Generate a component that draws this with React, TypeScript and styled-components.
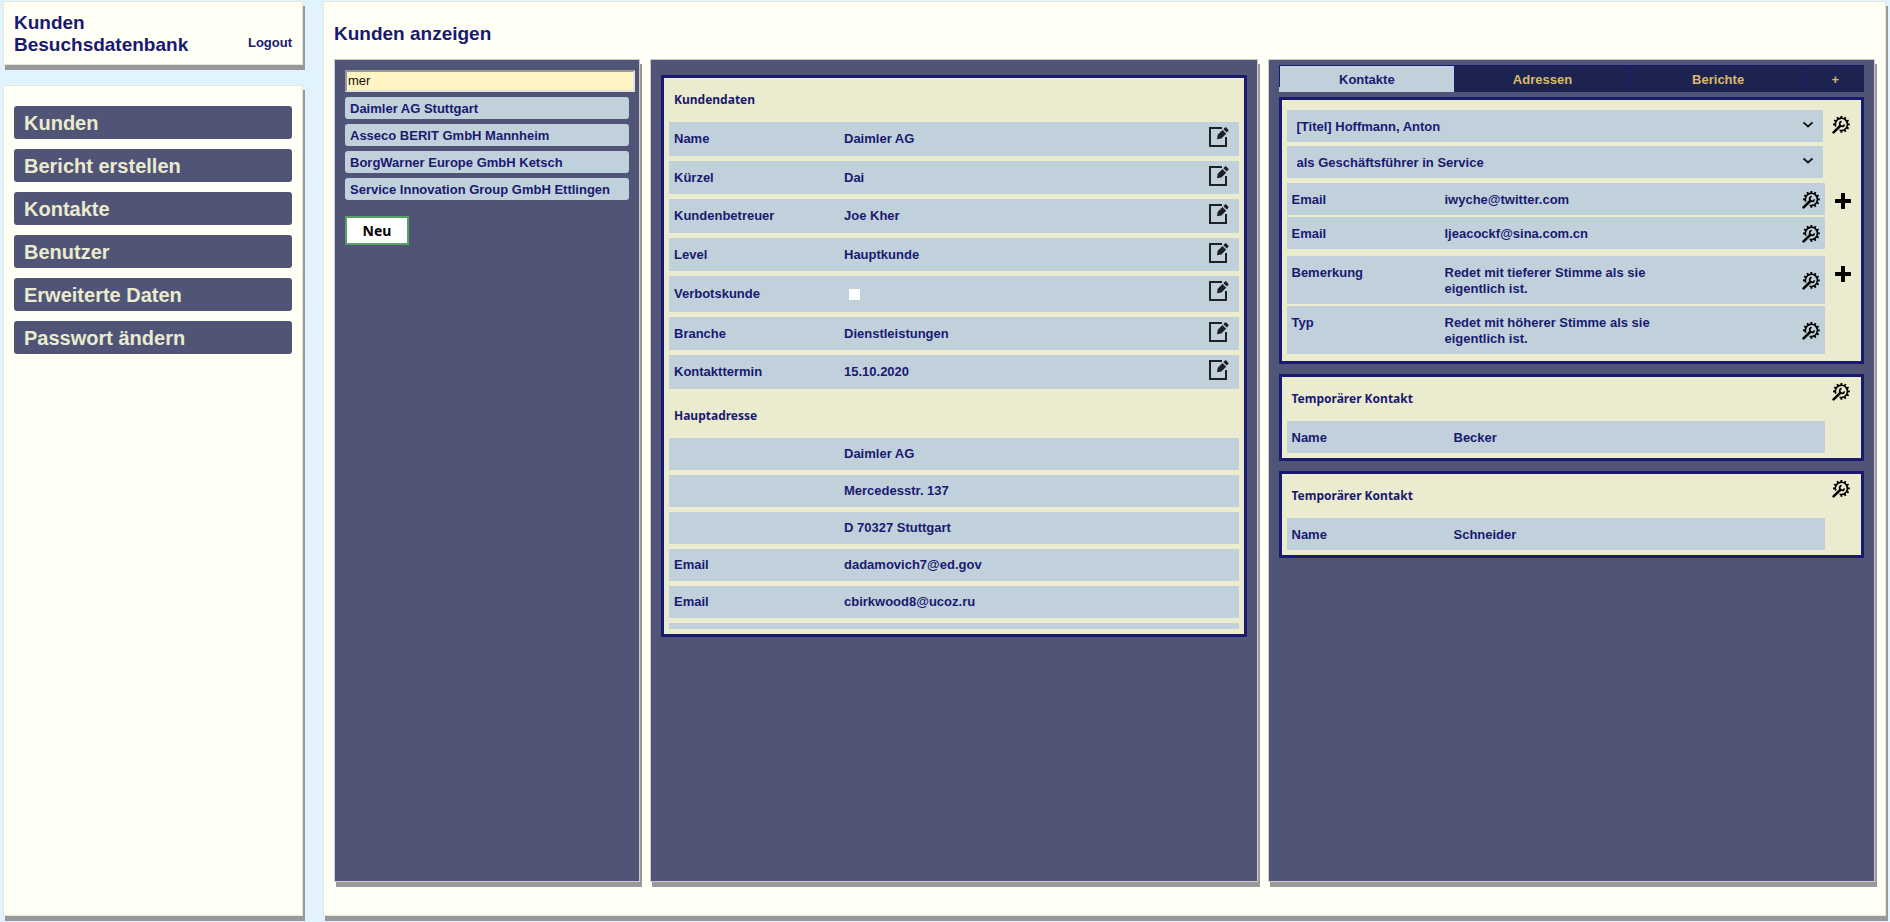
import React from "react";
import styled, { createGlobalStyle } from "styled-components";

const color = {
  sky: "#e1f3ff",
  ivory: "#fffff6",
  slate: "#505577",
  night: "#1d2351",
  navy: "#191970",
  cream: "#ebebcf",
  steel: "#c1d1dc",
  gold: "#dbb96b",
  shadow: "#999999",
};

const headingFont = `"Noto Sans", "Open Sans", sans-serif`;

const GlobalStyle = createGlobalStyle`
  * { box-sizing: border-box; }
  body {
    margin: 0;
    background: ${color.sky};
    color: ${color.navy};
    font: bold 13px/16px "Liberation Sans", Arial, sans-serif;
  }
  h1, h2, h3, ul, dl, dd { margin: 0; padding: 0; }
  button, input, select { font: inherit; color: inherit; }
  button { cursor: pointer; }
`;

const Page = styled.div`
  display: flex;
  gap: 20px;
  min-height: 100vh;
  padding: 1px 4px 6px 3px;
`;

const Sidebar = styled.div`
  display: flex;
  flex-direction: column;
  flex: 0 0 300px;
  gap: 20px;
`;

const Sheet = styled.div`
  background: ${color.ivory};
  border: 1px solid #e6e8d6;
  box-shadow: 2px 5px 0 ${color.shadow};
`;

const Brand = styled(Sheet).attrs({ as: "header" })`
  display: flex;
  justify-content: space-between;
  align-items: flex-end;
  height: 64px;
  padding: 8px 10px;
`;

const BrandTitle = styled.h1`
  font-size: 19px;
  line-height: 22px;
`;

const LogoutLink = styled.a`
  padding-bottom: 5px;
  color: inherit;
  text-decoration: none;
`;

const Navigation = styled(Sheet).attrs({ as: "nav" })`
  flex: 1;
  padding: 20px 10px;
`;

const NavList = styled.ul`
  display: flex;
  flex-direction: column;
  gap: 10px;
  list-style: none;
`;

const NavLink = styled.a`
  display: block;
  padding: 2px 10px 0;
  border-radius: 3px;
  background: ${color.slate};
  color: ${color.cream};
  font-size: 20px;
  line-height: 31px;
  text-decoration: none;
`;

const Main = styled(Sheet).attrs({ as: "main" })`
  display: flex;
  flex-direction: column;
  flex: 1;
  min-width: 0;
  padding: 0 10px 33px;
`;

const PageTitle = styled.h2`
  padding: 21px 0 14px;
  font-size: 19px;
  line-height: 22px;
`;

const Columns = styled.div`
  display: grid;
  grid-template-columns: 306px minmax(0, 1fr) minmax(0, 1fr);
  gap: 10px;
  flex: 1;
`;

const Column = styled.section<{ $top: number }>`
  padding: ${(p) => p.$top}px 10px 10px;
  background: ${color.slate};
  border: 1px solid #cccccc;
  box-shadow: 2px 5px 0 ${color.shadow};
`;

const SearchInput = styled.input`
  display: block;
  box-sizing: content-box;
  width: 100%;
  height: 16px;
  padding: 1px;
  border: 2px solid;
  border-color: #999999 #e2e2e2 #e2e2e2 #999999;
  background: #fff5c4;
  color: #111111;
  font-weight: normal;
  outline: 0;
`;

const ResultList = styled.ul`
  display: flex;
  flex-direction: column;
  gap: 5px;
  margin: 5px 0 16px;
  list-style: none;
`;

const ResultButton = styled.button`
  display: block;
  width: 100%;
  height: 22px;
  padding: 1px 5px 0;
  border: 0;
  border-radius: 3px;
  background: ${color.steel};
  text-align: left;
`;

const NewButton = styled.button`
  width: 64px;
  height: 29px;
  padding: 0;
  border: 2px solid #57a263;
  background: #ffffff;
  color: #000000;
  font: bold 14px/20px ${headingFont};
`;

const Card = styled.div`
  padding: 0 5px 5px;
  background: ${color.cream};
  border: 3px solid ${color.navy};
`;

const CardTitle = styled.h3`
  display: flex;
  align-items: center;
  height: 44px;
  padding: 0 5px;
  font: bold 12px/16px ${headingFont};
`;

const Details = styled.dl`
  display: flex;
  flex-direction: column;
  gap: 5px;
`;

const DetailRow = styled.div`
  display: grid;
  grid-template-columns: 170px 1fr 20px;
  align-items: center;
  height: 32px;
  padding: 0 10px 0 5px;
  background: ${color.steel};
`;

const EditableRow = styled(DetailRow)<{ $tall?: boolean }>`
  height: 34px;
  &:nth-of-type(even) { height: 33px; }
  &:nth-of-type(n) { ${(p) => (p.$tall ? "height: 36px;" : "")} }
`;

const RowEnd = styled.div`
  height: 6px;
  margin-top: 5px;
  background: ${color.steel};
`;

const IconButton = styled.button`
  display: block;
  padding: 0;
  border: 0;
  background: none;
  color: #000000;
  line-height: 0;
`;

const EditButton = styled(IconButton)`
  align-self: start;
  margin-top: 5px;
  color: #1f2024;
`;

const CheckBox = styled.input`
  display: block;
  appearance: none;
  width: 11px;
  height: 11px;
  margin: 0 5px;
  background: #ffffff;
`;

const TabBar = styled.div`
  display: grid;
  grid-template-columns: 3fr 3fr 3fr 1fr;
  margin-bottom: 5px;
`;

const Tab = styled.button<{ $active?: boolean }>`
  height: 27px;
  padding: 0 0 5px;
  border: 0;
  background: ${(p) => (p.$active ? color.steel : color.night)};
  color: ${(p) => (p.$active ? color.navy : color.gold)};
`;

const TabLabel = styled.span`
  display: block;
  height: 22px;
  padding-top: 6px;
  border: solid ${color.navy};
  border-width: 1px 0 0 1px;
`;

const CardStack = styled.div`
  display: flex;
  flex-direction: column;
  gap: 10px;
`;

const ContactCard = styled(Card)`
  padding: 10px 5px 7px;
`;

const Split = styled.div<{ $before?: number }>`
  display: grid;
  grid-template-columns: 1fr 31px;
  margin-top: ${(p) => p.$before ?? 0}px;
`;

const ToolCell = styled.div<{ $top: number; $left: number }>`
  padding: ${(p) => p.$top}px 0 0 ${(p) => p.$left}px;
`;

const SelectBox = styled.div`
  position: relative;
  margin-right: 2px;
`;

const Select = styled.select`
  display: block;
  appearance: none;
  width: 100%;
  height: 32px;
  padding: 1px 30px 0 10px;
  border: 0;
  border-radius: 0;
  background: ${color.steel};
`;

const SelectArrow = styled.svg`
  position: absolute;
  top: 11px;
  right: 10px;
  pointer-events: none;
`;

const ContactRows = styled.dl`
  display: flex;
  flex-direction: column;
  gap: 2px;
`;

const ContactRow = styled.div<{ $label?: number }>`
  display: grid;
  grid-template-columns: ${(p) => p.$label ?? 153}px 240px 1fr;
  align-items: start;
  padding: 9px 5px 7px;
  background: ${color.steel};
  > button { place-self: center end; margin: -2px 0; }
`;

function EditIcon() {
  return (
    <svg width="20" height="20" viewBox="0 0 20 20" fill="none" aria-hidden="true">
      <path d="M13 1H1v18h16V10" stroke="currentColor" strokeWidth="2" />
      <path d="M8 12.300l.7-4.500L13.400 3l3.800 3.700-4.800 4.800z" fill="currentColor" />
      <path d="M14.300 2.200L15.800.7c.5-.5 1.200-.5 1.700 0l1.700 1.700c.5.5.5 1.100 0 1.600L17.900 5.500z" fill="currentColor" />
    </svg>
  );
}

const teeth = Array.from({ length: 12 }, (_, i) => i * 30).filter((angle) => angle < 120 || angle > 150);

function ToolIcon() {
  return (
    <svg width="18" height="18" viewBox="0 0 18 18" fill="none" stroke="currentColor" aria-hidden="true">
      {teeth.map((angle) => (
        <path key={angle} d="M15.600 8.400h2.200" strokeWidth="1.900" transform={`rotate(${angle} 9.400 8.400)`} />
      ))}
      <path d="M3.700 10.600A6.100 6.100 0 1 1 7.600 14.200" strokeWidth="1.700" />
      <path d="M1.600 16.400L8.400 9.800" strokeWidth="2.600" strokeLinecap="round" />
      <path d="M9.700 5.500A2.400 2.400 0 1 0 12.400 8.300" strokeWidth="1.700" />
    </svg>
  );
}

function PlusIcon() {
  return (
    <svg width="16" height="16" viewBox="0 0 16 16" fill="currentColor" aria-hidden="true">
      <path d="M6.500 0h3l.5.5V6h5.500l.5.5v3l-.5.5H10v5.500l-.5.5h-3l-.5-.5V10H.5L0 9.500v-3L.5 6H6V.5z" />
    </svg>
  );
}

const navigation = ["Kunden", "Bericht erstellen", "Kontakte", "Benutzer", "Erweiterte Daten", "Passwort ändern"];

const results = [
  "Daimler AG Stuttgart",
  "Asseco BERIT GmbH Mannheim",
  "BorgWarner Europe GmbH Ketsch",
  "Service Innovation Group GmbH Ettlingen",
];

const customer: [string, string | null][] = [
  ["Name", "Daimler AG"],
  ["Kürzel", "Dai"],
  ["Kundenbetreuer", "Joe Kher"],
  ["Level", "Hauptkunde"],
  ["Verbotskunde", null],
  ["Branche", "Dienstleistungen"],
  ["Kontakttermin", "15.10.2020"],
];

const address = [
  ["", "Daimler AG"],
  ["", "Mercedesstr. 137"],
  ["", "D 70327 Stuttgart"],
  ["Email", "dadamovich7@ed.gov"],
  ["Email", "cbirkwood8@ucoz.ru"],
];

const contactGroups = [
  {
    before: 5,
    rows: [
      ["Email", "iwyche@twitter.com"],
      ["Email", "ljeacockf@sina.com.cn"],
    ],
  },
  {
    before: 7,
    rows: [
      ["Bemerkung", "Redet mit tieferer Stimme als sie eigentlich ist."],
      ["Typ", "Redet mit höherer Stimme als sie eigentlich ist."],
    ],
  },
];

const tabs = ["Kontakte", "Adressen", "Berichte", "+"];

function Picker({ label, value }: { label: string; value: string }) {
  return (
    <SelectBox>
      <Select aria-label={label} defaultValue={value}>
        <option>{value}</option>
      </Select>
      <SelectArrow width="10" height="8" viewBox="0 0 10 8" fill="none" aria-hidden="true">
        <path d="M.5 1.500l4.500 4 4.500-4" stroke="#111111" strokeWidth="1.700" />
      </SelectArrow>
    </SelectBox>
  );
}

function TemporaryContact({ name }: { name: string }) {
  return (
    <Card>
      <Split>
        <div>
          <CardTitle>Temporärer Kontakt</CardTitle>
          <dl>
            <ContactRow $label={162}>
              <dt>Name</dt>
              <dd>{name}</dd>
            </ContactRow>
          </dl>
        </div>
        <ToolCell $top={6} $left={7}>
          <IconButton aria-label="Kontakt bearbeiten"><ToolIcon /></IconButton>
        </ToolCell>
      </Split>
    </Card>
  );
}

export default function App() {
  return (
    <>
      <GlobalStyle />
      <Page>
        <Sidebar>
          <Brand>
            <BrandTitle>Kunden<br />Besuchsdatenbank</BrandTitle>
            <LogoutLink href="#logout">Logout</LogoutLink>
          </Brand>
          <Navigation>
            <NavList>
              {navigation.map((item) => (
                <li key={item}><NavLink href="#">{item}</NavLink></li>
              ))}
            </NavList>
          </Navigation>
        </Sidebar>

        <Main>
          <PageTitle>Kunden anzeigen</PageTitle>
          <Columns>
            <Column $top={10}>
              <SearchInput aria-label="Kunden suchen" defaultValue="mer" />
              <ResultList>
                {results.map((item) => (
                  <li key={item}><ResultButton>{item}</ResultButton></li>
                ))}
              </ResultList>
              <NewButton>Neu</NewButton>
            </Column>

            <Column $top={15}>
              <Card>
                <CardTitle>Kundendaten</CardTitle>
                <Details>
                  {customer.map(([label, value]) => (
                    <EditableRow key={label} $tall={value === null}>
                      <dt>{value === null ? <label htmlFor="verbot">{label}</label> : label}</dt>
                      <dd>{value ?? <CheckBox id="verbot" type="checkbox" />}</dd>
                      <EditButton aria-label={`${label} bearbeiten`}><EditIcon /></EditButton>
                    </EditableRow>
                  ))}
                </Details>
                <Split $before={5}>
                  <CardTitle>Hauptadresse</CardTitle>
                </Split>
                <Details>
                  {address.map(([label, value]) => (
                    <DetailRow key={value}>
                      <dt>{label}</dt>
                      <dd>{value}</dd>
                    </DetailRow>
                  ))}
                </Details>
                <RowEnd />
              </Card>
            </Column>

            <Column $top={5}>
              <TabBar role="tablist">
                {tabs.map((tab, i) => (
                  <Tab key={tab} role="tab" aria-selected={i === 0} $active={i === 0}>
                    <TabLabel>{tab}</TabLabel>
                  </Tab>
                ))}
              </TabBar>
              <CardStack>
                <ContactCard>
                  <Split>
                    <Picker label="Kontakt" value="[Titel] Hoffmann, Anton" />
                    <ToolCell $top={6} $left={7}>
                      <IconButton aria-label="Kontakt bearbeiten"><ToolIcon /></IconButton>
                    </ToolCell>
                  </Split>
                  <Split $before={4}>
                    <Picker label="Funktion" value="als Geschäftsführer in Service" />
                  </Split>
                  {contactGroups.map((group) => (
                    <Split key={group.rows[0][0]} $before={group.before}>
                      <ContactRows>
                        {group.rows.map(([label, value]) => (
                          <ContactRow key={value}>
                            <dt>{label}</dt>
                            <dd>{value}</dd>
                            <IconButton aria-label={`${label} bearbeiten`}><ToolIcon /></IconButton>
                          </ContactRow>
                        ))}
                      </ContactRows>
                      <ToolCell $top={10} $left={10}>
                        <IconButton aria-label="Hinzufügen"><PlusIcon /></IconButton>
                      </ToolCell>
                    </Split>
                  ))}
                </ContactCard>
                <TemporaryContact name="Becker" />
                <TemporaryContact name="Schneider" />
              </CardStack>
            </Column>
          </Columns>
        </Main>
      </Page>
    </>
  );
}
